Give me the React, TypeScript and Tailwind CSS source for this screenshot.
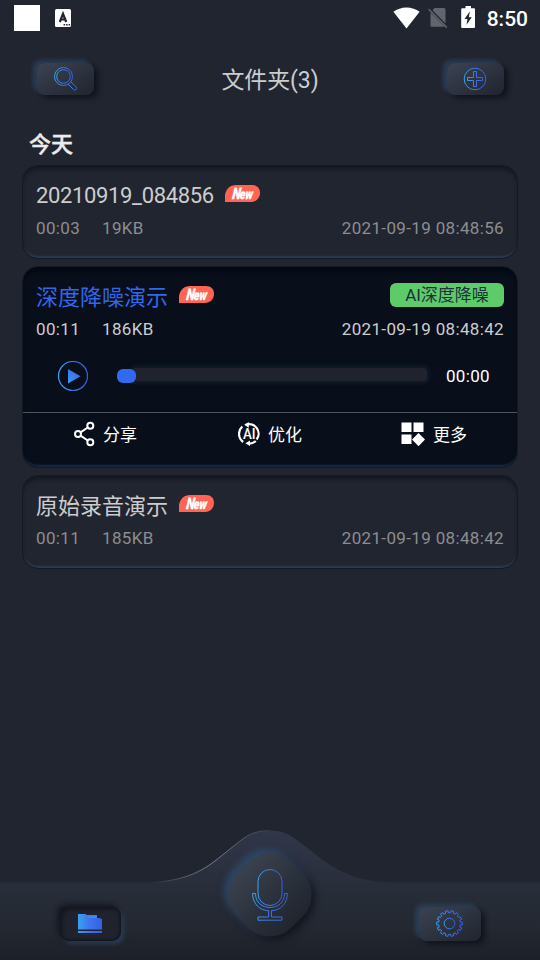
import type { ReactNode } from "react";

const RAISED =
  "bg-gradient-to-br from-[#3b4353] to-[#20242e] shadow-[-4px_-3px_4px_rgba(48,76,108,0.6),4px_3px_5px_rgba(14,17,25,0.85)]";

function Gradients() {
  return (
    <svg width="0" height="0" className="absolute">
      <defs>
        <linearGradient id="blue" gradientUnits="objectBoundingBox" x1="0" y1="0.5" x2="1" y2="0.5">
          <stop offset="0" stopColor="#38a1ee" />
          <stop offset="0.45" stopColor="#3f76ee" />
          <stop offset="1" stopColor="#3560e0" />
        </linearGradient>
        <linearGradient id="play" x1="0" y1="1" x2="0.6" y2="0">
          <stop offset="0" stopColor="#3f9cf2" />
          <stop offset="1" stopColor="#3568ee" />
        </linearGradient>
      </defs>
    </svg>
  );
}

function StatusBar() {
  return (
    <div className="flex h-9 items-center pl-[14px] pr-[12px]">
      <div className="size-[26px] bg-white" />
      <svg className="ml-[15px]" width="16" height="18" viewBox="0 0 16 18">
        <rect width="16" height="18" rx="1.5" fill="#fff" />
        <path d="M4.800 13 8 4.800l3.200 8.200M6 10.500h4" fill="none" stroke="#212530" strokeWidth="2.200" />
        <path d="M8.600 15.800h1.500M11.100 15.800h1.500M13.600 15.800h1.500" stroke="#212530" strokeWidth="1.400" />
      </svg>
      <svg className="-mt-px ml-auto" width="27" height="22" viewBox="0 0 27 22">
        <path d="M13.500 21.500 0.400 4.800C4 2 8.500 0.400 13.500 0.400s9.500 1.600 13.100 4.400z" fill="#fff" />
      </svg>
      <svg className="ml-[8px]" width="20" height="22" viewBox="0 0 20 22">
        <path d="M6.500 1H16a1.500 1.500 0 0 1 1.500 1.500V16.500L4.500 3.200zM2.500 5.400 16.600 19.800H4a1.500 1.500 0 0 1-1.500-1.500z" fill="#62656d" />
        <path d="M0.700 2.200 18.800 20.600" stroke="#62656d" strokeWidth="1.500" />
      </svg>
      <svg className="-mt-[2px] ml-[13px]" width="15" height="22" viewBox="0 0 15 22">
        <path d="M4.500 0h5.500v2.200H13a1 1 0 0 1 1 1V21a1 1 0 0 1-1 1H1.200a1 1 0 0 1-1-1V3.200a1 1 0 0 1 1-1H4.500z" fill="#fff" />
        <path d="M8.900 5.300 3.500 13h3L5.500 18.800l5.300-7.600H7.800z" fill="#212530" />
      </svg>
      <span className="ml-[11px] mt-[2px] text-[21px] font-medium leading-none text-white">8:50</span>
    </div>
  );
}

function Header() {
  return (
    <div className="flex h-[88px] items-start justify-between pl-[37px] pr-[36px] pt-[27px]">
      <button className={`flex h-8 w-[57px] items-center justify-center rounded-lg ${RAISED}`}>
        <svg className="-mt-px" width="25" height="25" viewBox="0 0 25 25" fill="none" stroke="url(#blue)" strokeWidth="1">
          <circle cx="10.500" cy="10.500" r="9" />
          <circle cx="10.500" cy="10.500" r="6.800" />
          <path d="M15.300 18.300 20.500 23.500a1.600 1.600 0 0 0 2.700-2.600L18 15.900" />
        </svg>
      </button>
      <h1 className="-ml-px mt-[2px] text-[23px] leading-8 tracking-[-0.1px] text-[#cdcdcd]">文件夹(3)</h1>
      <button className={`flex h-8 w-[57px] items-center justify-center rounded-lg ${RAISED}`}>
        <svg className="-ml-px" width="24" height="24" viewBox="0 0 24 24" fill="none" stroke="url(#blue)" strokeWidth="1">
          <circle cx="12" cy="12" r="10.800" />
          <path d="M10.500 4.500h3v6h6v3h-6v6h-3v-6h-6v-3h6z" />
        </svg>
      </button>
    </div>
  );
}

function NewBadge() {
  return (
    <svg className="ml-[11px] overflow-visible" width="35" height="17" viewBox="0 0 35 17">
      <path d="M0 17V10C1 4 5 0 11 0H27c5 0 8 3 8 8s-4 9-9 9z" fill="#ff6552" />
      <text
        transform="translate(7 14.200) skewX(-6) scale(0.760 1)"
        fontFamily="Roboto, sans-serif"
        fontWeight="900"
        fontStyle="italic"
        fill="#fff"
        stroke="#fff"
        strokeWidth="0.300"
      >
        <tspan fontSize="16">N</tspan>
        <tspan fontSize="14" dx="-1.200" dy="-0.500">ew</tspan>
      </text>
    </svg>
  );
}

interface RecordingProps {
  title: string;
  duration: string;
  size: string;
  date: string;
  active?: boolean;
  tag?: string;
  children?: ReactNode;
}

function Recording({ title, duration, size, date, active, tag, children }: RecordingProps) {
  const latin = /^[\w.-]+$/.test(title);
  return (
    <section
      className={`rounded-[16px] border border-[#141924] ${
        active
          ? "h-[202px] bg-[#080f1b] shadow-[inset_0_4px_4px_#030813,inset_0_-3px_2px_-1px_#1a2b44]"
          : "h-[94px] bg-[#212530] shadow-[inset_0_4px_4px_-1px_#12161f,inset_0_-3px_2px_-1px_#2c3b52]"
      }`}
    >
      <div className="mt-[12px] flex h-8 items-center px-[13px]">
        <span
          className={`text-[22px] leading-8 ${latin ? "mt-[4px] tracking-[-0.35px]" : "mt-[6px]"} ${
            active ? "text-[#3068ec]" : "text-[#cdcdcd]"
          }`}
        >
          {title}
        </span>
        <div className="-mt-[2px]">
          <NewBadge />
        </div>
        {tag && (
          <span className="ml-auto flex h-6 w-[114px] items-center justify-center rounded-[6px] bg-[#5ecb6b] text-[17px] leading-6 text-[#21303a]">
            {tag}
          </span>
        )}
      </div>
      <div
        className={`mt-[8px] flex px-[13px] text-[17px] leading-5 tracking-[0.35px] ${
          active ? "text-[#cdcdcd]" : "text-[#8d8d8f]"
        }`}
      >
        <span className="w-[66px]">{duration}</span>
        <span>{size}</span>
        <span className="ml-auto">{date}</span>
      </div>
      {children}
    </section>
  );
}

function Player() {
  return (
    <div className="mt-[21px] flex h-[32px] items-center pl-[35px] pr-[27px]">
      <svg width="31" height="31" viewBox="0 0 31 31">
        <circle cx="15" cy="15" r="14.500" fill="none" stroke="url(#blue)" strokeWidth="1.200" />
        <path d="M10 8v14.500l12.500-7.250z" fill="url(#play)" />
      </svg>
      <div className="ml-[28px] flex h-[14px] w-[310px] items-center">
        <div className="z-10 h-[14px] w-[19px] shrink-0 rounded-[6px] bg-[#306af0]" />
        <div className="-ml-[4px] -mt-[3px] h-[13px] flex-1 rounded-[4px] bg-[#20232d] shadow-[0_0_4px_2px_rgba(27,40,58,0.6)]" />
      </div>
      <span className="ml-auto mt-[2px] text-[17px] tracking-[0.35px] text-white">00:00</span>
    </div>
  );
}

function Actions() {
  return (
    <div className="mt-[20px] flex h-[43px] items-center justify-between border-t border-[#4d535d] px-[50px] text-[17px] text-white">
      <div className="flex items-center gap-[8px]">
        <svg width="22" height="26" viewBox="0 0 22 26" fill="none" stroke="#fff" strokeWidth="2">
          <circle cx="5" cy="13" r="3" />
          <circle cx="17.300" cy="4.800" r="3" />
          <circle cx="17.300" cy="21.200" r="3" />
          <path d="M7.500 11.300 14.800 6.500M7.500 14.700l7.300 4.800" />
        </svg>
        <span className="mt-[4px]">分享</span>
      </div>
      <div className="ml-[2px] flex items-center gap-[8px]">
        <svg width="22" height="24" viewBox="0 0 22 24" fill="none" stroke="#fff" strokeWidth="2.200">
          <path d="M5.200 20A10 10 0 0 1 4.300 4.500M8 2.700A9.500 9.500 0 0 1 18.600 17.500" />
          <path d="M17.800 19A9.500 9.500 0 0 1 11 21.600" />
          <path d="M10.800 0 6.200 2.800l4.600 3zM12 18.600l-4.600 2.700 4.600 2.700z" fill="#fff" stroke="none" />
          <text
            transform="translate(11.200 17) scale(0.920 1)"
            textAnchor="middle"
            fontFamily="Roboto, sans-serif"
            fontSize="14.500"
            fontWeight="500"
            fill="#fff"
            stroke="none"
          >
            AI
          </text>
        </svg>
        <span className="mt-[4px]">优化</span>
      </div>
      <div className="flex items-center gap-[8px]">
        <svg width="24" height="24" viewBox="0 0 24 24" fill="#fff">
          <path d="M0.500 0.500h10V10h-10zM12.500 0.500h10V10h-10zM0.500 12.500h10V22h-10zM17.500 11l6.500 6.600-6.500 6.600-6.500-6.600z" />
        </svg>
        <span className="mt-[4px]">更多</span>
      </div>
    </div>
  );
}

function gearPath(teeth: number, outer: number, inner: number) {
  const pts: string[] = [];
  const step = (Math.PI * 2) / teeth;
  for (let i = 0; i < teeth; i++) {
    const a = (i + 0.5) * step;
    const corners: [number, number][] = [
      [-0.27, inner],
      [-0.25, outer],
      [0.25, outer],
      [0.27, inner],
    ];
    for (const [k, r] of corners) {
      pts.push(`${(13.5 + r * Math.sin(a + k * step)).toFixed(2)} ${(13.5 - r * Math.cos(a + k * step)).toFixed(2)}`);
    }
  }
  return `M${pts.join("L")}Z`;
}

function BottomNav() {
  return (
    <nav className="relative h-[130px]">
      <svg className="absolute inset-0" width="540" height="130" viewBox="0 0 540 130">
        <defs>
          <linearGradient id="bar" x1="0" y1="0" x2="0" y2="1">
            <stop offset="0" stopColor="#31374a" />
            <stop offset="0.420" stopColor="#282e3a" />
            <stop offset="0.750" stopColor="#232831" />
            <stop offset="1" stopColor="#1c2028" />
          </linearGradient>
          <linearGradient id="edge" gradientUnits="userSpaceOnUse" x1="150" y1="0" x2="272" y2="0">
            <stop offset="0" stopColor="#7b8190" stopOpacity="0" />
            <stop offset="0.500" stopColor="#7b8190" />
            <stop offset="1" stopColor="#7b8190" stopOpacity="0.100" />
          </linearGradient>
        </defs>
        <path
          d="M0 52.500H150C180 51 198 44 215 31L240 11C250 3 258 0.500 270 0.500C282 0.500 291 5 301 13L322 29.500C344 45 362 51.500 392 52.500H540V130H0Z"
          fill="url(#bar)"
        />
        <path d="M150 52.500C180 51 198 44 215 31L240 11C250 3 258 0.500 270 0.500" fill="none" stroke="url(#edge)" />
      </svg>
      <div className="relative flex h-full items-start justify-between pl-[60px] pr-[59px]">
        <button className="mt-[77px] flex h-[34px] w-[61px] items-center justify-center rounded-[9px] bg-[#20232e] shadow-[inset_2px_2px_4px_#12151d,inset_-1px_-1px_3px_#12151d,-3px_-3px_5px_#141820,3px_3px_4px_#2a3c53]">
          <svg className="-ml-[2px] -mt-px" width="24" height="19" viewBox="0 0 24 19">
            <path d="M0 0h8v1h11v3h2.500l2.500 1v10.500H0zM0 17h24v2H0z" fill="url(#blue)" />
            <path d="M9 1.500h10v2.500h-8z" fill="#3f8af2" />
          </svg>
        </button>
        <button className="relative mr-[1px] mt-[27px] flex size-[76px] items-center justify-center">
          <span className="absolute inset-0 rotate-45 rounded-[30px] bg-gradient-to-r from-[#3a414e] to-[#20252e] shadow-[-6px_0_7px_rgba(48,78,112,0.8),6px_0_7px_rgba(18,22,31,0.9)]" />
          <svg className="relative" width="36" height="52" viewBox="0 0 36 52" fill="none" stroke="url(#blue)" strokeWidth="1">
            <path d="M6 12.500a12 12 0 0 1 24 0v12a12 12 0 0 1-24 0z" />
            <path d="M0.600 24.500H3.500c0 9 6.500 14 14.500 14s14.500-5 14.500-14h2.900c0 10-6.900 17-16 17.200V48H30v3.200H6V48h10.600v-6.300C7.500 41.500 0.600 34.500 0.600 24.500z" />
          </svg>
        </button>
        <button className={`mt-[77px] flex h-[34px] w-[62px] items-center justify-center rounded-[8px] ${RAISED}`}>
          <svg className="-ml-px -mt-px" width="27" height="27" viewBox="0 0 27 27" fill="none" stroke="url(#blue)" strokeWidth="1">
            <path d={gearPath(14, 12.9, 10.9)} />
            <circle cx="13.500" cy="13.500" r="5.300" />
          </svg>
        </button>
      </div>
    </nav>
  );
}

export default function App() {
  return (
    <div className="flex h-[960px] w-[540px] flex-col overflow-hidden bg-[#212530] font-['Roboto','Noto_Sans_CJK_SC',sans-serif]">
      <Gradients />
      <StatusBar />
      <Header />
      <h2 className="ml-[29px] mt-[5px] h-[36px] text-[22px] font-medium leading-8 text-[#ececec] [-webkit-text-stroke:0.4px_#ececec]">
        今天
      </h2>
      <main className="flex flex-1 flex-col gap-[7px] px-[22px]">
        <Recording title="20210919_084856" duration="00:03" size="19KB" date="2021-09-19 08:48:56" />
        <Recording
          title="深度降噪演示"
          duration="00:11"
          size="186KB"
          date="2021-09-19 08:48:42"
          tag="AI深度降噪"
          active
        >
          <Player />
          <Actions />
        </Recording>
        <Recording title="原始录音演示" duration="00:11" size="185KB" date="2021-09-19 08:48:42" />
      </main>
      <BottomNav />
    </div>
  );
}
